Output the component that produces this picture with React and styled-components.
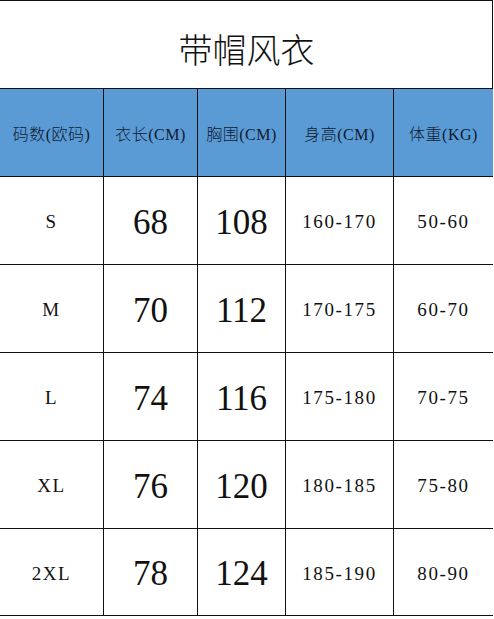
import React from "react";
import styled, { createGlobalStyle } from "styled-components";

const Global = createGlobalStyle`
  html, body { margin: 0; padding: 0; background: #ffffff; }
  body { font-family: "Liberation Serif", "Noto Sans CJK SC", serif; }
`;

const Table = styled.div`
  width: 493px;
  box-sizing: border-box;
  border-right: 1px solid #111;
  display: grid;
  grid-template-columns: 103px 94px 88px 108px 100px;
  grid-auto-rows: 88px;
`;

const Title = styled.div`
  grid-column: 1 / -1;
  border-top: 1px solid #111;
  display: flex;
  align-items: center;
  justify-content: center;
  padding-top: 8px;
  box-sizing: border-box;
  font-family: "Noto Sans CJK SC", sans-serif;
  font-weight: 300;
  font-size: 34px;
  color: #111;
`;

const Cell = styled.div`
  box-sizing: border-box;
  border-top: 1px solid #111;
  border-left: ${(p) => (p.$first ? "none" : "1px solid #111")};
  border-bottom: ${(p) => (p.$last ? "1px solid #111" : "none")};
  background: ${(p) => (p.$head ? "#5b9bd5" : "#ffffff")};
  display: flex;
  align-items: center;
  justify-content: center;
  color: ${(p) => (p.$head ? "#0f1a30" : "#111")};
  white-space: nowrap;
`;

const HeadText = styled.span`
  font-family: "Liberation Serif", "Noto Sans CJK SC", serif;
  font-size: 16px;
  letter-spacing: 0.5px;
  font-weight: 300;
`;

const Big = styled.span`
  font-family: "Liberation Serif", serif;
  font-size: 35px;
  padding-top: 4px;
`;

const Small = styled.span`
  font-family: "Liberation Serif", serif;
  font-size: 19px;
  letter-spacing: 1.6px;
  padding-top: 3px;
`;

const headers = ["码数(欧码)", "衣长(CM)", "胸围(CM)", "身高(CM)", "体重(KG)"];
const rows = [
  ["S", "68", "108", "160-170", "50-60"],
  ["M", "70", "112", "170-175", "60-70"],
  ["L", "74", "116", "175-180", "70-75"],
  ["XL", "76", "120", "180-185", "75-80"],
  ["2XL", "78", "124", "185-190", "80-90"],
];

export default function App() {
  return (
    <>
      <Global />
      <Table>
        <Title>带帽风衣</Title>
        {headers.map((h, i) => (
          <Cell key={h} $head $first={i === 0}>
            <HeadText>{h}</HeadText>
          </Cell>
        ))}
        {rows.map((r, ri) =>
          r.map((v, ci) => (
            <Cell key={ri + "-" + ci} $first={ci === 0} $last={ri === rows.length - 1}>
              {ci === 1 || ci === 2 ? <Big>{v}</Big> : <Small>{v}</Small>}
            </Cell>
          ))
        )}
      </Table>
    </>
  );
}
